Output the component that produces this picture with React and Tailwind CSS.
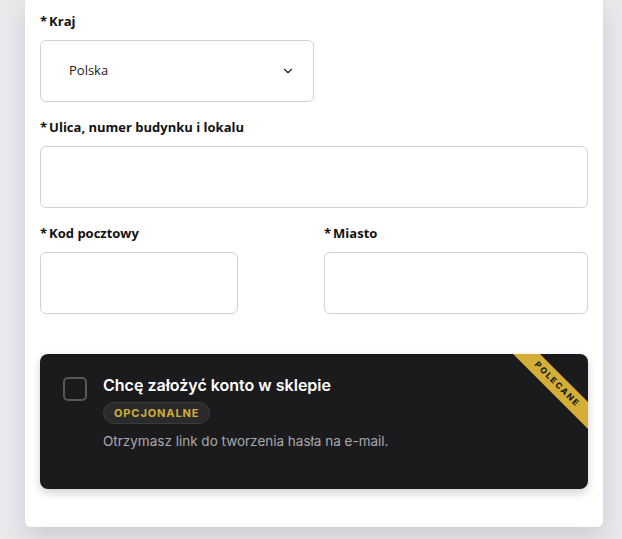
import React from "react";
import { ChevronDown } from "lucide-react";

const Label = ({ children }) => (
  <label className="block text-[13px] leading-5 font-bold text-[#111] font-['Open_Sans','Inter',sans-serif]">
    <span className="mr-[2px]">*</span>
    {children}
  </label>
);

const Field = ({ label, className = "" }) => (
  <div className="flex flex-col gap-[9px]">
    <Label>{label}</Label>
    <input
      type="text"
      className={"h-[62px] rounded-[6px] border border-[#d2d2d4] bg-white outline-none " + className}
    />
  </div>
);

export default function App() {
  return (
    <div className="min-h-[539px] w-full bg-[#eae9ec] pl-[25px] pb-3 font-['Inter',sans-serif]">
      <div className="w-[578px] rounded-b-[6px] bg-white px-[15px] pt-[11px] pb-[38px] shadow-[0_10px_24px_rgba(70,65,100,0.18)]">
        <div className="flex flex-col gap-[9px]">
          <Label>Kraj</Label>
          <div className="flex h-[62px] w-[274px] items-center justify-between rounded-[6px] border border-[#d2d2d4] pl-[28px] pr-[18px]">
            <span className="text-[13px] text-[#222] font-['Open_Sans','Inter',sans-serif]">Polska</span>
            <ChevronDown size={14} strokeWidth={2} className="text-[#222]" />
          </div>
        </div>

        <div className="mt-[15px]">
          <Field label="Ulica, numer budynku i lokalu" />
        </div>

        <div className="mt-[15px] grid grid-cols-2 gap-x-5">
          <Field label="Kod pocztowy" className="w-[198px]" />
          <Field label="Miasto" />
        </div>

        <div className="relative mt-[40px] flex h-[135px] gap-4 overflow-hidden rounded-[8px] bg-[#1b1b1d] pl-[23px] pt-[23px] shadow-[0_4px_10px_rgba(0,0,0,0.18)]">
          <div className="h-6 w-6 shrink-0 rounded-[5px] border-2 border-[#58585c]" />
          <div className="flex flex-col items-start">
            <div className="-mt-[4px] text-[16px] leading-6 font-semibold text-white">
              Chcę założyć konto w sklepie
            </div>
            <span className="mt-[5px] rounded-full border border-[#3a3a3d] bg-[#2a2a2c] px-[10px] text-[11px] leading-[20px] font-bold tracking-[0.08em] text-[#d4ae37]">
              OPCJONALNE
            </span>
            <p className="mt-[7px] text-[13.5px] leading-5 text-[#a9a9ad]">
              Otrzymasz link do tworzenia hasła na e-mail.
            </p>
          </div>
          <div className="absolute right-[-29px] top-[21px] flex h-[19px] w-[120px] rotate-45 items-center justify-center bg-[#d4ae37]">
            <span className="text-[8.5px] font-extrabold tracking-[0.2em] text-[#1b1b1d]">POLECANE</span>
          </div>
        </div>
      </div>
    </div>
  );
}
